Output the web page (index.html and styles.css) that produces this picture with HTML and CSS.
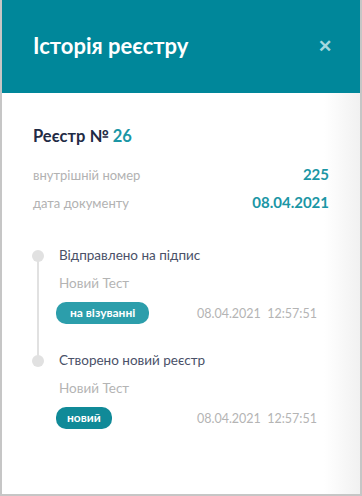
FILE: index.html
```html
<!DOCTYPE html>
<html lang="uk">
<head>
    <meta charset="UTF-8">
    <meta name="viewport" content="width=device-width, initial-scale=1.0">
    <title>Історія реєстру</title>
    <link rel="stylesheet" href="styles.css">
</head>
<body>
    <div class="panel">
        <div class="panel-header">
            <h1 class="panel-title">Історія реєстру</h1>
            <span class="close">&#x2715;</span>
        </div>

        <div class="panel-body">
            <h2 class="registry">Реєстр № <span class="accent">26</span></h2>

            <div class="info-row">
                <span class="info-label">внутрішній номер</span>
                <span class="info-value">225</span>
            </div>
            <div class="info-row">
                <span class="info-label">дата документу</span>
                <span class="info-value">08.04.2021</span>
            </div>

            <div class="timeline">
                <div class="event">
                    <div class="event-title">Відправлено на підпис</div>
                    <div class="event-user">Новий Тест</div>
                    <div class="event-meta">
                        <span class="badge badge-review">на візуванні</span>
                        <span class="event-date">08.04.2021&nbsp; 12:57:51</span>
                    </div>
                </div>
                <div class="event">
                    <div class="event-title">Створено новий реєстр</div>
                    <div class="event-user">Новий Тест</div>
                    <div class="event-meta">
                        <span class="badge badge-new">новий</span>
                        <span class="event-date">08.04.2021&nbsp; 12:57:51</span>
                    </div>
                </div>
            </div>
        </div>
    </div>
</body>
</html>
```

FILE: styles.css
```css
body {
    margin: 0;
    font-family: Lato, "Noto Sans", sans-serif;
    background-color: #fff;
}
.panel {
    width: 362px;
    height: 496px;
    box-sizing: border-box;
    border: 2px solid #c6c6c6;
    border-top: none;
    display: flex;
    flex-direction: column;
    background: linear-gradient(to right, #fff 90%, #f1f1f1);
}
.panel-header {
    height: 93px;
    flex-shrink: 0;
    background-color: #00879a;
    display: flex;
    align-items: center;
    justify-content: space-between;
    padding: 0 28px 0 31px;
}
.panel-title {
    margin: 0 0 2px 0;
    color: #fff;
    font-size: 22px;
    font-weight: 700;
}
.close {
    color: #a5d9df;
    font-size: 17px;
    font-weight: 700;
    margin-bottom: 2px;
}
.panel-body {
    padding: 33px 31px 0 31px;
}
.registry {
    margin: 0 0 19px 0;
    font-size: 16.5px;
    font-weight: 700;
    color: #1f2b45;
}
.accent {
    color: #1b96a5;
}
.info-row {
    display: flex;
    justify-content: space-between;
    align-items: baseline;
    height: 28px;
}
.info-label {
    font-size: 13px;
    color: #b2b2b2;
}
.info-value {
    font-size: 15px;
    font-weight: 700;
    color: #1b96a5;
}
.timeline {
    margin-top: 26px;
    display: flex;
    flex-direction: column;
    gap: 28px;
}
.event {
    position: relative;
    padding-left: 26px;
}
.event::before {
    content: "";
    position: absolute;
    left: -1px;
    top: 3px;
    width: 12px;
    height: 12px;
    border-radius: 50%;
    background-color: #e1e1e1;
}
.event:first-child::after {
    content: "";
    position: absolute;
    left: 4px;
    top: 9px;
    width: 2px;
    bottom: -36px;
    background-color: #e1e1e1;
}
.event-title {
    font-size: 13.5px;
    color: #4a5168;
    height: 19px;
}
.event-user {
    margin-top: 9px;
    font-size: 13.5px;
    color: #b4b4b4;
}
.event-meta {
    margin-top: 11px;
    margin-left: -3px;
    padding-right: 12px;
    display: flex;
    align-items: center;
    justify-content: space-between;
}
.badge {
    display: inline-block;
    padding: 3px 14px 4px;
    border-radius: 10px;
    font-size: 12px;
    font-weight: 700;
    color: #fff;
}
.badge-review {
    background-color: #2c9eab;
}
.badge-new {
    background-color: #108a98;
    padding: 3px 11px 4px;
}
.event-date {
    font-size: 12.5px;
    color: #b4b4b4;
}
```
